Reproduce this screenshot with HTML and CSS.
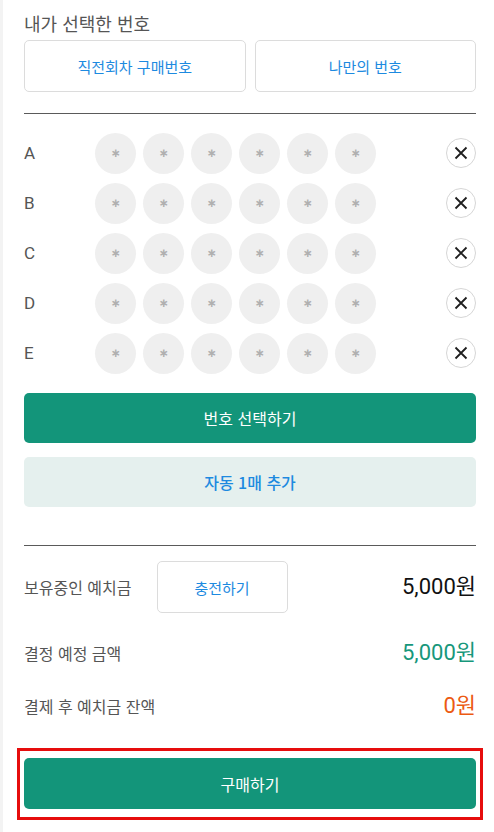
FILE: index.html
```html
<!DOCTYPE html>
<html lang="ko">
<head>
  <meta charset="UTF-8">
  <meta name="viewport" content="width=device-width, initial-scale=1.0">
  <title>내가 선택한 번호</title>
  <link rel="stylesheet" href="styles.css">
</head>
<body>
  <div class="page">
    <h2 class="title">내가 선택한 번호</h2>
    <div class="source-buttons">
      <button class="btn-outline">직전회차 구매번호</button>
      <button class="btn-outline">나만의 번호</button>
    </div>

    <div class="divider"></div>

    <ul class="game-list">
      <li class="game-row">
        <span class="game-label">A</span>
        <div class="balls">
          <span class="ball">∗</span><span class="ball">∗</span><span class="ball">∗</span>
          <span class="ball">∗</span><span class="ball">∗</span><span class="ball">∗</span>
        </div>
        <button class="btn-remove"><svg viewBox="0 0 16 16" width="16" height="16"><path d="M2.5 2.5 L13.5 13.5 M13.5 2.5 L2.5 13.5" stroke="#1e1e1e" stroke-width="1.8" fill="none"/></svg></button>
      </li>
      <li class="game-row">
        <span class="game-label">B</span>
        <div class="balls">
          <span class="ball">∗</span><span class="ball">∗</span><span class="ball">∗</span>
          <span class="ball">∗</span><span class="ball">∗</span><span class="ball">∗</span>
        </div>
        <button class="btn-remove"><svg viewBox="0 0 16 16" width="16" height="16"><path d="M2.5 2.5 L13.5 13.5 M13.5 2.5 L2.5 13.5" stroke="#1e1e1e" stroke-width="1.8" fill="none"/></svg></button>
      </li>
      <li class="game-row">
        <span class="game-label">C</span>
        <div class="balls">
          <span class="ball">∗</span><span class="ball">∗</span><span class="ball">∗</span>
          <span class="ball">∗</span><span class="ball">∗</span><span class="ball">∗</span>
        </div>
        <button class="btn-remove"><svg viewBox="0 0 16 16" width="16" height="16"><path d="M2.5 2.5 L13.5 13.5 M13.5 2.5 L2.5 13.5" stroke="#1e1e1e" stroke-width="1.8" fill="none"/></svg></button>
      </li>
      <li class="game-row">
        <span class="game-label">D</span>
        <div class="balls">
          <span class="ball">∗</span><span class="ball">∗</span><span class="ball">∗</span>
          <span class="ball">∗</span><span class="ball">∗</span><span class="ball">∗</span>
        </div>
        <button class="btn-remove"><svg viewBox="0 0 16 16" width="16" height="16"><path d="M2.5 2.5 L13.5 13.5 M13.5 2.5 L2.5 13.5" stroke="#1e1e1e" stroke-width="1.8" fill="none"/></svg></button>
      </li>
      <li class="game-row">
        <span class="game-label">E</span>
        <div class="balls">
          <span class="ball">∗</span><span class="ball">∗</span><span class="ball">∗</span>
          <span class="ball">∗</span><span class="ball">∗</span><span class="ball">∗</span>
        </div>
        <button class="btn-remove"><svg viewBox="0 0 16 16" width="16" height="16"><path d="M2.5 2.5 L13.5 13.5 M13.5 2.5 L2.5 13.5" stroke="#1e1e1e" stroke-width="1.8" fill="none"/></svg></button>
      </li>
    </ul>

    <button class="btn-primary btn-select">번호 선택하기</button>
    <button class="btn-light">자동 1매 추가</button>

    <div class="divider divider-pay"></div>

    <div class="pay-row pay-row-first">
      <span class="pay-label">보유중인 예치금</span>
      <button class="btn-outline btn-charge">충전하기</button>
      <span class="pay-amount">5,000원</span>
    </div>
    <div class="pay-row">
      <span class="pay-label">결정 예정 금액</span>
      <span class="pay-amount amount-green">5,000원</span>
    </div>
    <div class="pay-row">
      <span class="pay-label">결제 후 예치금 잔액</span>
      <span class="pay-amount amount-orange">0원</span>
    </div>

    <div class="buy-box">
      <button class="btn-primary btn-buy">구매하기</button>
    </div>
  </div>
</body>
</html>
```

FILE: styles.css
```css
body {
  margin: 0;
  background-color: #fff;
  font-family: 'Noto Sans CJK KR', 'Noto Sans', sans-serif;
  color: #555;
}
.page {
  border-left: 3px solid #f3f3f3;
  padding: 11px 18px 20px 21px;
  min-height: 801px;
}
.title {
  margin: 0;
  font-size: 18px;
  font-weight: 400;
  line-height: 24px;
  color: #555;
}
button {
  font-family: inherit;
  cursor: pointer;
}
.source-buttons {
  display: grid;
  grid-template-columns: 1fr 1fr;
  gap: 9px;
  margin-top: 5px;
}
.btn-outline {
  height: 52px;
  background: #fff;
  border: 1px solid #dcdcdc;
  border-radius: 5px;
  color: #1d8ae0;
  font-size: 15px;
}
.divider {
  border-top: 1px solid #5a5a5a;
  margin-top: 21px;
}
.game-list {
  list-style: none;
  margin: 14px 0 0;
  padding: 0;
}
.game-row {
  display: flex;
  align-items: center;
  height: 50px;
}
.game-label {
  width: 71px;
  font-family: Roboto, 'Noto Sans', sans-serif;
  font-size: 17px;
  color: #555;
}
.balls {
  display: flex;
  gap: 7px;
  flex: 1;
}
.ball {
  width: 41px;
  height: 41px;
  border-radius: 50%;
  background: #efefef;
  color: #b0b0b0;
  font-family: 'DejaVu Sans', sans-serif;
  font-size: 12px;
  font-weight: 700;
  display: flex;
  align-items: center;
  justify-content: center;
}
.btn-remove {
  width: 30px;
  height: 30px;
  border-radius: 50%;
  border: 1px solid #d6d6d6;
  background: #fff;
  padding: 0;
  display: flex;
  align-items: center;
  justify-content: center;
}
.btn-primary {
  display: block;
  width: 100%;
  height: 50px;
  border: none;
  border-radius: 5px;
  background: #13957a;
  color: #fff;
  font-size: 16px;
}
.btn-select {
  margin-top: 15px;
}
.btn-light {
  display: block;
  width: 100%;
  height: 50px;
  margin-top: 14px;
  border: none;
  border-radius: 5px;
  background: #e5f0ee;
  color: #1d8ae0;
  font-size: 16px;
  font-weight: 500;
}
.divider-pay {
  margin-top: 38px;
}
.pay-row {
  display: flex;
  align-items: center;
  margin-top: 27px;
  line-height: 26px;
}
.pay-row-first {
  margin-top: 15px;
}
.pay-label {
  font-size: 16px;
  color: #555;
}
.btn-charge {
  width: 131px;
  margin-left: 25px;
}
.pay-amount {
  margin-left: auto;
  font-family: Roboto, 'Noto Sans CJK KR', sans-serif;
  font-size: 22px;
  color: #111;
}
.amount-green {
  color: #17977b;
}
.amount-orange {
  color: #ec5a12;
}
.buy-box {
  margin: 29px -7px 0;
  border: 3px solid #e60d0d;
  padding: 7px 4px 8px;
}
.btn-buy {
  height: 51px;
}
```
